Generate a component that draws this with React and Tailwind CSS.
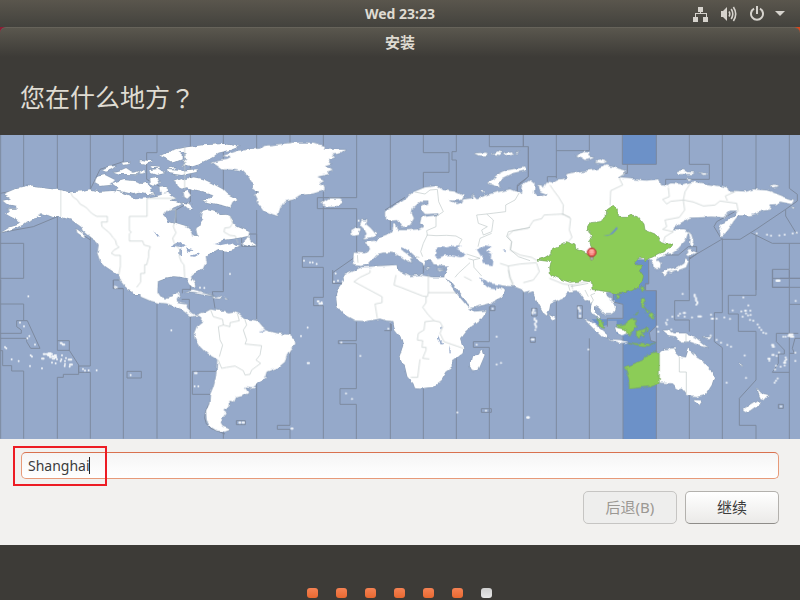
import React, { useState } from 'react';

// map units: 3 per pixel at 800px width, every region has its own origin
const REGIONS = {
    americaNorth: 'translate(0 -15)',
    atlantic: 'translate(540 -15)',
    europe: 'translate(990 -15)',
    asia: 'translate(1500 -15)',
    fareast: 'translate(1920 -15)',
    americaSouth: 'translate(0 435)',
    africa: 'translate(960 405)',
    oceania: 'translate(1560 405)',
};

const LAND = {
    americaNorth: [
        'M8,212 35,206 26,199 12,193 34,184 48,175 80,168 110,172 150,177 180,180 212,187 245,184 268,178 300,185 340,183 365,188 385,196 402,205 440,203 480,196 500,188 527,205 510,212 530,214 545,222 530,230 505,240 490,258 505,275 528,282 560,292 573,302 578,317 592,318 588,300 600,285 610,270 602,262 605,245 625,241 650,248 660,255 680,254 690,262 700,278 712,290 735,300 748,306 745,318 725,322 700,326 670,330 650,342 690,336 700,345 720,350 700,358 680,362 655,360 645,366 630,370 620,380 622,392 615,400 608,415 595,425 582,432 573,440 580,455 586,468 580,472 572,462 563,448 545,444 520,442 490,448 474,454 470,492 400,492 388,472 368,448 360,440 345,428 318,410 300,392 292,370 296,345 288,330 268,316 243,290 215,270 182,260 160,262 145,256 125,250 115,256 122,260 100,266 85,272 68,285 50,292 30,300 10,305 2,308 30,292 55,284 60,278 50,268 35,262 18,252 30,240 22,236 50,236 48,228 20,222Z',
        'M285,160 290,140 315,135 345,150 330,165 300,168Z',
        'M335,160 370,150 410,154 425,162 445,158 455,172 450,184 465,194 440,192 420,188 400,192 370,185 345,182 355,174Z',
        'M303,120 325,110 347,108 335,118 315,125Z',
        'M340,125 360,122 378,114 400,128 415,123 413,133 360,132Z',
        'M365,98 390,95 385,103 370,105Z M420,90 458,94 440,102 420,99Z M420,123 430,120 432,130 420,131Z M455,108 480,110 478,115 458,114Z',
        'M478,78 500,66 530,62 545,72 545,88 520,98 500,88Z',
        'M520,60 560,52 610,46 670,42 717,50 690,60 655,68 640,80 618,92 598,102 570,110 548,106 560,98 545,95 562,86 548,80 560,70 540,66Z',
        'M500,120 540,122 590,118 590,126 545,135 505,130Z M450,120 475,116 495,129 470,135 455,130Z',
        'M450,148 472,143 478,158 465,166 452,160Z M478,170 500,168 502,184 488,194 480,185Z',
        'M524,152 545,144 560,150 580,142 610,148 635,160 668,178 682,192 712,208 698,215 690,232 670,226 640,220 608,212 628,204 640,196 618,190 585,182 560,172 545,176 530,168Z',
        'M548,188 565,182 575,196 565,206 550,200Z M545,218 575,222 590,238 565,236Z M502,118 525,110 520,118Z',
        'M724,342 738,328 745,318 752,332 768,345 745,348Z',
        'M228,296 256,316 252,322 232,308Z M246,290 262,304 280,318 302,335 296,340 270,322 250,304Z',
        'M344,468 352,470 348,474Z M356,434 372,450 392,470 400,482 384,478 364,452Z',
    ],
    atlantic: [
        'M95,98 120,92 138,90 152,82 128,78 175,62 215,58 240,56 250,48 280,45 340,38 400,38 435,48 428,58 495,60 480,70 455,74 465,82 445,88 456,100 436,106 458,118 440,124 448,132 412,140 432,150 418,158 432,166 434,180 400,190 360,195 340,208 312,215 300,235 293,258 275,252 250,240 232,215 222,195 240,186 216,176 218,160 205,140 190,125 155,118 125,118Z',
        'M422,212 430,218 445,208 480,208 490,216 470,230 440,230 430,224Z',
    ],
    europe: [
        'M165,265 165,245 190,230 225,205 250,186 285,172 320,168 340,180 375,185 402,198 395,210 370,212 358,210 378,222 395,218 400,208 430,205 428,192 440,205 470,195 510,185 540,178 570,190 600,200 600,445 352,442 362,430 370,408 345,410 310,405 303,388 285,388 280,408 270,395 255,378 240,365 215,352 217,362 250,384 240,386 246,398 222,388 195,370 180,368 160,368 140,372 128,385 112,402 95,408 72,405 70,385 72,368 105,370 120,358 115,345 102,337 135,332 155,320 180,310 188,300 190,282 198,285 205,300 235,300 265,298 280,290 270,280 275,262 300,258 325,255 325,250 285,252 275,240 275,225 295,220 295,212 275,212 248,235 245,250 252,265 240,285 218,292 204,270 185,272Z',
        'M95,270 112,272 108,282 122,294 140,315 126,322 96,325 110,312 103,298 90,285Z M64,300 78,292 92,296 86,314 66,318Z',
        'M475,160 500,135 530,120 585,112 587,120 545,130 515,145 508,158 512,172Z M452,182 462,184 458,190Z',
        'M435,70 470,68 472,76 450,77Z M485,72 500,64 515,68 510,75Z M522,68 545,64 552,74 530,76Z M556,67 566,66 562,71Z M188,294 196,292 200,300Z M284,414 304,416 296,419Z M318,416 344,418 326,420Z',
    ],
    asia: [
        'M0,188 50,185 62,190 66,165 90,150 104,162 102,190 112,200 134,196 138,200 142,192 120,184 116,165 128,166 130,174 140,158 155,160 175,148 198,145 200,132 235,125 290,118 320,106 350,114 378,122 372,132 352,144 400,148 440,152 475,148 480,165 505,168 510,160 552,162 580,155 620,162 682,172 685,182 740,185 760,178 805,182 850,200 882,210 875,222 840,215 830,222 805,224 815,238 790,242 765,252 750,256 715,256 700,275 690,292 678,308 663,320 657,300 662,285 682,270 706,255 712,245 690,245 670,262 635,260 600,262 570,263 540,280 520,298 550,298 565,305 557,330 535,355 515,370 495,372 470,386 482,400 480,415 465,418 462,402 450,390 420,385 400,400 400,445 0,445Z',
        'M228,76 250,66 272,68 268,78 282,84 258,90 245,82Z M284,98 300,88 322,94 310,100Z',
    ],
    fareast: [
        'M65,428 85,418 112,412 130,400 136,385 146,392 138,412 115,420 85,425 75,438 68,436Z M138,374 150,356 158,364 170,366 155,374 144,378Z M145,300 153,310 160,334 154,350 147,340 150,320Z',
        'M112,124 128,120 145,126 164,128 158,132 118,132Z M174,128 200,130 196,135Z M136,144 154,145 148,150Z M392,168 405,164 414,168 400,172Z M452,230 468,234 460,236Z',
    ],
    americaSouth: [
        'M372,0 395,18 420,38 422,50 450,62 475,68 500,70 520,78 540,85 560,100 572,110 590,106 604,110 608,118 622,100 605,98 590,104 578,102 566,92 560,80 562,70 545,68 532,65 530,60 540,45 535,38 520,42 514,52 500,56 482,50 472,35 470,0Z',
        'M610,100 632,88 650,92 672,92 685,97 700,95 718,102 735,116 770,122 785,140 800,152 830,160 865,164 885,178 886,192 870,208 860,225 855,245 835,262 800,275 795,292 775,310 760,325 735,322 745,338 730,348 705,352 700,365 688,362 690,375 682,385 670,392 680,400 668,415 662,430 668,440 692,448 675,455 650,452 628,438 620,420 618,395 628,375 630,345 640,320 648,290 652,238 620,220 600,200 585,175 582,160 590,140 605,128 608,112Z',
        'M556,36 580,32 615,40 640,48 600,42Z M636,52 655,48 668,52 655,56 640,54Z M674,54 684,57 676,58Z M568,0 580,0 586,14 578,18Z M356,-4 368,4 390,28 376,20Z',
    ],
    africa: [
        'M125,-8 95,5 70,15 72,30 55,55 48,75 52,110 75,135 105,152 140,153 180,146 200,152 220,153 225,180 245,205 250,225 238,262 255,290 262,320 280,340 285,354 300,356 340,350 365,330 380,305 395,295 395,275 428,250 430,235 420,205 440,180 480,150 500,122 460,125 445,112 430,95 412,74 395,50 375,22 340,22 300,15 270,18 255,10 232,0 230,-15 180,-12Z',
        'M372,20 392,35 415,64 440,95 450,115 515,98 550,80 555,62 530,50 545,46 600,50 620,50 620,-20 390,-20Z',
        'M488,238 494,255 475,300 458,304 450,288 455,262 475,255Z',
    ],
    oceania: [
        'M-60,-20 -60,46 -20,48 5,58 12,66 30,62 22,72 40,66 45,80 55,100 72,130 80,137 88,122 92,98 110,92 130,82 145,68 165,65 175,65 185,78 195,92 212,88 215,100 212,122 225,138 238,146 236,138 222,125 222,108 235,112 245,122 256,132 270,132 285,122 288,110 280,95 262,82 258,68 280,60 280,-20Z',
        'M92,132 104,142 98,148 92,144Z M195,150 212,155 245,180 265,198 262,206 245,200 225,180Z M265,208 300,210 325,216 300,219Z',
        'M285,172 325,178 325,190 305,196 290,188Z',
        'M428,182 448,180 462,190 500,190 530,205 548,220 562,230 530,222 510,215 480,215 468,200 448,196Z',
        'M417,250 430,238 465,235 468,248 480,260 498,262 507,232 515,250 530,262 550,275 575,300 582,322 575,345 558,372 530,378 500,375 485,355 478,358 465,350 455,340 417,338Z M524,390 547,392 536,408Z',
        'M712,356 722,368 746,376 733,390 722,388Z M668,420 690,404 712,390 720,400 690,422 676,426Z M550,204 576,200 568,208Z M654,278 670,288 660,286Z M424,12 440,6 436,16Z M442,4 466,4 454,10Z',
    ],
};

const SELECTED_LAND = {
    asia: [
        'M112,390 135,382 155,370 158,355 182,345 200,335 225,345 228,358 250,365 265,372 275,350 268,335 277,320 272,308 260,300 272,278 300,275 318,265 320,240 340,226 352,240 352,262 380,262 395,255 415,260 432,282 435,300 465,312 480,335 498,342 517,342 505,358 470,375 450,385 435,392 432,382 418,385 412,396 405,396 410,405 432,405 418,422 430,440 425,460 415,472 395,482 365,490 350,492 330,486 300,482 276,478 275,456 250,452 210,457 180,447 148,432 146,412 152,395Z',
    ],
    oceania: [
        'M284,76 298,74 294,84 286,86Z M362,52 372,50 370,64 362,64Z',
        'M362,88 372,84 376,98 370,108 378,116 366,112Z M376,118 390,124 384,130Z M386,142 392,130 402,136 400,147Z M342,134 356,126 348,134Z',
        'M290,168 312,165 335,145 350,148 345,160 350,165 335,190 325,195 320,180 292,172Z',
        'M352,182 366,180 378,174 374,188 362,188 376,200 368,202 362,194 358,206 352,202Z M378,170 386,180 382,188Z',
        'M325,217 350,221 365,219 392,224 406,218 386,228 350,225Z',
        'M228,145 242,148 250,158 254,172 240,168Z',
        'M316,290 345,280 368,270 385,252 405,246 418,250 418,338 385,350 345,355 328,357 326,330Z',
    ],
};

// seas and lakes lying over the land shapes
const WATER = {
    americaNorth: [
        'M508,348 530,335 558,345 548,352 520,348Z M538,358 547,354 545,378 538,376Z M558,352 580,358 572,366 566,370Z M570,378 596,368 600,370 582,380Z M460,302 468,306 480,322 474,322Z M402,200 430,198 450,204 420,206Z',
        'M566,220 590,225 600,240 580,240Z M640,342 656,338 668,334 690,330 712,336 712,342 690,340 660,346Z',
    ],
    europe: [
        'M315,378 318,358 332,348 350,352 366,348 392,346 380,356 398,366 408,376 395,382 365,376 345,376 325,384Z M440,358 465,346 485,350 468,362 484,372 482,384 490,392 488,406 462,402 455,382Z M214,352 222,354 240,368 235,372Z',
    ],
    asia: ['M8,358 20,358 16,364Z'],
    africa: [
        'M480,22 490,28 515,40 545,45 540,52 530,48 528,58 510,56 500,50 488,38Z',
        'M354,192 360,210 372,220 362,220 354,206Z M388,226 393,246 388,246Z M360,170 368,175 362,180Z',
    ],
    americaSouth: ['M778,152 800,150 790,156Z'],
};

// zone limits drawn on the water
const ZONE_LINES = {
    americaNorth: 'M2,15V480 M71,15V168 M0,340H71V445H0 M172,15V480 M172,260 100,290 0,308 M271,15V178L300,118 370,95V15 M271,318V480 M271,330 228,300 M471,15V68H440V148L500,180 M571,15V215L528,240V300 M370,475H340V450H358 M0,190 30,185',
    atlantic: 'M130,15V190 M130,355V480 M230,15V190 M230,240V480 M205,312H230V349H185V320 M330,15V480 M430,15V50 M430,185V380H367V412H430V480 M530,15V203H412V236H530V378L458,428V460H485',
    europe: 'M181,15V300 M280,15V68H357V127H280V180 M379,15V65H366V90H379V190 M379,350V385 M478,15V50H595V140L562,170V190 M580,15V50 M165,240 225,202 M280,385V430',
    asia: 'M70,15V50 M169,15V145 M268,15V62H169 M367,15V103H469V15 M382,103V130H350 M52,185V165L85,140V50 M142,155V140H169 M446,390V460H437V480',
    fareast: 'M148,15V103H208V148H77V165 M247,15V165 M247,325V480 M348,15V180 M348,310V480 M448,15V175L472,193V213L437,238 348,298 300,328H245L222,290 230,275 285,245 M437,238V258L470,312 M332,308 397,340H480 M448,340V418H397V472H480 M448,445V418 M480,445H420 M148,380V480 M148,385 245,328 M75,375H115L145,350H170V372L148,388',
    americaSouth: 'M2,0V476 M0,72H71V122H50V140L64,150V160H0 M0,175H80V185L92,205H120L82,122H71 M0,212H8V257H35V273H71V476 M172,0V211H208L236,255V283H190V292H172V476 M172,182H208V212 M271,0V258H236V277H271V476 M340,0V26H370V476 M471,70V476 M571,110V476 M547,40V28H571 M545,58H568V90 M571,0V32 M670,0V35H637L645,85 M670,455V476 M770,0V122 M770,310V476 M870,0V165 M870,200V436H832V448H870V476 M970,0V52H941V77H970V476 M381,274H424V294H381Z M577,274H650 M577,274V343H630 M709,422H736V434H709Z M628,370Q598,420 632,445L675,462',
    africa: 'M109,155V212H55V221H109V356H60V403H109V508 M211,160V508 M193,182H214V162 M310,356V508 M409,265V508 M508,110V215H460V232H508V508 M484,416H514V427H484Z M510,108H525V122H510Z M610,50V508 M635,115H651V138H635Z M631,202H646V217H631Z M38,0V40H68',
    oceania: 'M109,90V507 M208,205V507 M309,200V507 M409,62V507 M508,0V92H464V150H508V185 M508,375V507 M607,0V128H583V215L607,233V507 M708,0V76H625V132H655V184H708V330L658,385V466H708V507 M808,0V507 M758,0V25H840 M758,25V52H808 M808,103H840 M835,190H769V215L793,240V252H775V280L757,307H808 M840,205H825L817,235 823,250H808 M775,403H790V415H775Z M172,107H187V145H172Z M280,66V96L309,103V145H262V170 M386,0V42H376V62H409V168L388,188 392,212 409,217',
};

const BORDERS = {
    americaNorth: 'M182,180V260 M212,187 218,200 232,210 240,222 258,232 275,250 290,259H322V276H304L306,290 330,310 338,322 346,330 350,345 357,352 342,360 334,370 345,376H361V408L356,436 M528,205H441V259H388V302L394,306 388,312V333H428L432,345 451,350 446,364 446,380 440,404H434V430H422V456L410,472 M510,238 528,240 527,262 520,290 528,308 518,325 522,338 540,360 538,380 544,395 552,405 554,442 M554,50V180 M690,258 698,280 690,292 674,294 672,306 690,316 706,318 714,340',
    europe: 'M255,186 285,192 300,180 322,178 326,215 340,245 318,260 318,290 290,302 292,315 280,340 272,365 278,380 M290,315 318,317 350,316 378,318 396,328 385,348 M568,188 555,210 527,225V245L470,252 440,255 445,280 472,290 455,300 460,315 485,305 490,270 470,252 M485,310 450,325 444,350 M268,382 258,380 M82,375 84,398 M600,292 535,305 530,320 545,335 542,360 565,380 600,392 M410,372 450,385 430,390 415,386 M430,390 432,412 455,438 M420,398 385,430 375,442',
    asia: 'M150,165 160,180 175,200 190,225 188,255 M210,262 188,252 132,255 125,266 100,272 85,295 40,302 22,318 35,335 30,360 60,375 95,382 112,392 M188,252 212,265 208,300 216,322 205,335 M378,125 358,145 368,165 332,182 330,226 M0,400 25,408 60,402 110,398 M25,408 28,440 40,470 M110,400 118,425 100,450 70,458 M148,445 190,462 218,465 240,460 275,450 M215,462 218,478',
    fareast: 'M85,172 88,200 68,208 80,222 92,214 130,210 135,185 150,162 M130,210 160,216 190,228 225,225 240,213 290,220 295,245 M262,212 256,198 285,185 M130,212 134,240 118,262 75,270 80,290 68,298 100,305 75,320 70,338',
    americaSouth: 'M632,90 640,110 668,118 670,135 655,140 660,180 668,195 658,230 M670,135 690,140 690,128 718,122 712,100 M734,116 740,135 730,150 740,180 735,192 785,197 780,225 768,240 782,250 755,270 750,283 735,285 730,272 705,258 680,262 665,265 655,240',
    africa: 'M150,0 150,8 120,22 102,35 186,80V98L165,102 172,145 M228,15 222,45 242,52 308,78 322,80 325,68H408 M325,12V68 M318,80V98L308,112 325,135 342,152 315,155 312,180 295,190 292,210 308,212 306,232H318V240L308,265 328,267 M300,268 297,290 293,322 272,322 M342,152 360,156 368,170 360,190 372,215 430,235 M432,20 455,32 M565,0 572,25 580,42',
    oceania: 'M478,260V306H499V372 M498,190V218 M215,100 220,90 212,75 225,70 M145,45 150,62 M195,60 205,80 M152,50 180,45 205,40',
};

const ISLETS = {
    americaNorth: 'M345,470h0 M350,472h0',
    atlantic: 'M150,432h0 M372,392h0 M390,397h0 M398,397h0 M410,402h0 M467,430h0 M462,455h0 M474,452h0 M488,454h0 M536,272h0 M60,473h0 M73,474h0',
    fareast: 'M350,310h0 M381,314h0 M393,317h0 M418,316h0 M434,314h0 M458,310h0 M470,308h0 M410,452h8',
    americaSouth: 'M85,49h0 M60,128h0 M72,139h0 M88,168h0 M82,175h0 M105,194h0 M15,201h0 M19,205h0 M35,238h0 M56,243h0 M92,226h0 M96,230h0 M90,258h0 M126,265h0 M126,236h5 M131,222h4 M140,222h3 M146,220h6 M144,226h6 M153,222h3 M150,231h3 M157,229h4 M164,226h4 M158,236h5 M166,232h3 M171,238h0 M156,248h0 M167,250h0 M186,226h0 M184,238h0 M182,243h0 M198,234h0 M206,239h8 M195,243h0 M195,252h0 M194,258h0 M210,254h6 M209,260h0 M182,189h3 M188,194h5 M249,267h0 M255,272h0 M266,271h0 M290,271h0 M392,285h0 M585,279h5 M584,319h0 M595,319h0 M514,151h0 M903,168h0 M923,143h0 M923,249h4 M718,428h3 M728,428h4 M874,446h4 M953,64h3 M958,71h8 M965,67h0',
    africa: 'M64,217h0 M121,258h0 M78,370h0 M96,387h0 M205,176h0 M470,224h0 M530,200h0 M530,283h0 M543,279h0 M412,427h0 M498,422h0 M518,116h0 M622,442h4',
    oceania: 'M41,118v3 M38,126v4 M45,128h0 M44,145v5 M49,152v4 M45,160v4 M48,168v4 M46,180h0 M35,208h6 M176,112v4 M180,120v4 M180,136v4 M205,238h0 M22,442h4 M488,72h0 M524,74v5 M528,84v8 M532,96v4 M529,104h0 M480,131h0 M491,129h4 M494,140h0 M475,137h0 M457,140h0 M516,142h0 M535,139h8 M442,150h0 M438,158h0 M440,163h0 M573,134h0 M575,146h4 M590,146h0 M613,142h0 M630,147h0 M670,82h0 M638,121h0 M664,124h0 M675,122h3 M685,106h0 M691,122h0 M678,130h0 M684,136h0 M692,135h0 M668,140h0 M690,150h0 M700,152h0 M713,163h0 M718,172h0 M724,180h0 M730,188h0 M738,190h0 M827,93h0 M790,200h0 M797,200h0 M805,198h8 M808,193h10 M812,200h8 M770,32h8 M756,225h4 M758,230h4 M777,247h0 M757,255h4 M770,258h0 M745,266h4 M748,272h0 M797,262h0 M799,268h0 M795,272h0 M792,278h4 M794,286h0 M782,290h0 M768,287h0 M765,298h0 M826,273h0 M826,248h0 M773,325h0 M768,332h0 M764,338h0 M678,324h0 M620,338h0 M783,409h0 M590,210h0 M603,218h0 M622,225h0 M633,230h0 M674,256h0 M454,178h0 M415,185h0 M412,170h0 M572,196h0',
};

const Shapes = ({ data }) =>
    Object.entries(data).map(([region, paths]) => (
        <g key={region} transform={REGIONS[region]}>
            {[].concat(paths).map((d) => (
                <path key={d} d={d} />
            ))}
        </g>
    ));

const WorldMap = () => (
    <svg viewBox="0 0 2400 912" className="block w-full h-auto bg-[#95a9ca]" role="img" aria-label="时区地图">
        <defs>
            <filter id="coast" x="0" y="0" width="100%" height="100%" colorInterpolationFilters="sRGB">
                <feTurbulence type="fractalNoise" baseFrequency="0.05" numOctaves="2" seed="4" />
                <feDisplacementMap in="SourceGraphic" scale="13" xChannelSelector="R" yChannelSelector="G" />
            </filter>
            <g id="land">
                <Shapes data={LAND} />
            </g>
            <radialGradient id="pinHead" cx="0.5" cy="0.4" r="0.6">
                <stop offset="0" stopColor="#ffaaa2" />
                <stop offset="1" stopColor="#ea4a48" />
            </radialGradient>
        </defs>

        {/* selected zone */}
        <g fill="#6c91c8">
            <path d="M1867,0H1970V88H1867Z" />
            <path
                transform={REGIONS.oceania}
                d="M386,-30V42H376V62H409V168L388,188 392,212 409,217V507H309V200L290,190V152H262V165L240,170 215,148H309V103L280,95V60L340,40V-30Z"
            />
        </g>

        <g fill="none" stroke="#7d8a9f" strokeWidth="3">
            <Shapes data={ZONE_LINES} />
        </g>

        <g filter="url(#coast)">
            <use href="#land" fill="none" stroke="#8799ae" strokeWidth="3" />
            <use href="#land" fill="#ffffff" />
            <g fill="#95a9ca">
                <Shapes data={WATER} />
            </g>
        </g>

        <g fill="none" stroke="#c0c9c9" strokeWidth="2" strokeLinejoin="round">
            <Shapes data={BORDERS} />
        </g>

        <g filter="url(#coast)" fill="#8ccc57" stroke="#76a262" strokeWidth="2">
            <Shapes data={SELECTED_LAND} />
        </g>

        {/* Baikal */}
        <path
            transform={REGIONS.asia}
            d="M310,317 328,314 340,302 350,290 353,296 338,312 322,318Z"
            fill="#6c91c8"
        />

        <g fill="none" stroke="#f4f7fa" strokeWidth="6" strokeLinecap="round">
            <Shapes data={ISLETS} />
        </g>

        {/* pin */}
        <g transform="translate(1775 352)">
            <path d="M-4,12H4V20L0,24 -4,20Z" fill="#b5b5b5" stroke="#777777" strokeWidth="2" />
            <circle r="13" fill="url(#pinHead)" stroke="#a92f2f" strokeWidth="3" />
            <path d="M-6,-6H6M-7,0H7M-5,6H5" stroke="#ffc7c0" strokeWidth="2" />
        </g>
    </svg>
);

const NetworkIcon = () => (
    <svg width="16" height="16" viewBox="0 0 16 16" fill="#d6d3cd">
        <path d="M5 1h5v5H8v1h6v4h1v5h-5v-5h3V8H3v3h2v5H0v-5h2V7h5V6H5z" />
    </svg>
);

const VolumeIcon = () => (
    <svg width="16" height="16" viewBox="0 0 16 16" fill="none" stroke="#d6d3cd" strokeWidth="1.6">
        <path d="M0 5h2l4-4v14l-4-4H0z" fill="#d6d3cd" stroke="none" />
        <path d="M8 5.5q1.6 2.5 0 5M10.2 3q3.2 5 0 10M12.4 1q4.6 7 0 14" />
    </svg>
);

const PowerIcon = () => (
    <svg width="16" height="16" viewBox="0 0 16 16" fill="none" stroke="#d6d3cd" strokeWidth="2">
        <path d="M5 2.6a6 6 0 1 0 6 0M8 0v8" />
    </svg>
);

const TopBar = () => (
    <header className="relative flex h-[27px] items-center justify-center bg-linear-to-b from-[#5a564d] to-[#43423d] text-[#dfdbd2]">
        <span className="text-sm font-bold leading-5">Wed 23:23</span>
        <div className="absolute inset-y-0 right-[15px] flex items-center gap-3">
            <button type="button" aria-label="网络"><NetworkIcon /></button>
            <button type="button" aria-label="音量"><VolumeIcon /></button>
            <button type="button" aria-label="电源" className="flex items-center gap-2.5">
                <PowerIcon />
                <svg width="10" height="5" viewBox="0 0 10 5" fill="#d6d3cd">
                    <path d="M0 0h10L5 5z" />
                </svg>
            </button>
        </div>
    </header>
);

const STEPS = 7;

const App = () => {
    const [city, setCity] = useState('Shanghai');

    return (
        <div className="flex min-h-screen flex-col overflow-hidden bg-[#3d3b37] font-['Noto_Sans','Noto_Sans_CJK_SC',sans-serif]">
            <TopBar />

            <div className="bg-linear-to-r from-[#8c1d35] to-[#d9461a]">
                <div className="flex h-[30px] items-center justify-center rounded-t-md border-t border-[#66635a] bg-linear-to-b from-[#5a574e] to-[#3d3b37] pb-0.5 text-[15px] leading-5 font-bold text-[#dfdbd2]">
                    安装
                </div>
            </div>
            <h1 className="flex h-[78px] items-center px-5 pt-0.5 text-[25px] leading-8 font-normal text-[#dfdbd2]">
                您在什么地方<span className="font-['Noto_Sans_CJK_TC']" lang="zh-TW">？</span>
            </h1>

            <main className="bg-[#f2f1ef]">
                <WorldMap />

                <form className="px-[21px] pt-[13px] pb-[21px]" onSubmit={(e) => e.preventDefault()}>
                    <div className="relative">
                        <input
                            type="text"
                            name="city"
                            aria-label="城市"
                            value={city}
                            onChange={(e) => setCity(e.target.value)}
                            className="block h-[27px] w-full rounded-[5px] border border-[#e79a79] border-t-[#d9714f] bg-linear-to-b from-[#f5f5f5] to-white px-1.5 text-sm text-[#3c3c3c] caret-transparent outline-none"
                        />
                        <span className="absolute top-[5px] left-[68px] h-[17px] w-px bg-[#222]" />
                        <span className="pointer-events-none absolute -top-1.5 -left-2 h-10 w-[94px] border-2 border-[#ed1c24]" />
                    </div>

                    <div className="mt-3 flex justify-end gap-2">
                        <button
                            type="button"
                            disabled
                            className="h-[33px] w-[94px] rounded-[5px] border border-[#c6c5c3] bg-[#eeeeed] text-[15px] text-[#9b9893]"
                        >
                            后退(B)
                        </button>
                        <button
                            type="submit"
                            className="h-[33px] w-[94px] rounded-[5px] border border-[#b3b1ad] border-b-[#8f8d89] bg-linear-to-b from-white to-[#ebeae8] text-[15px] text-[#3c3c3c]"
                        >
                            继续
                        </button>
                    </div>
                </form>
            </main>

            <footer className="flex flex-1 items-end justify-center gap-[18px] pr-0.5 pb-0.5">
                {Array.from({ length: STEPS }, (_, i) => (
                    <span
                        key={i}
                        className={
                            i < STEPS - 1
                                ? 'h-2.5 w-[11px] rounded-[3px] bg-linear-to-b from-[#f58253] to-[#e9682f]'
                                : 'h-2.5 w-[11px] rounded-[3px] bg-linear-to-b from-[#cfcfcf] to-[#e8e8e8]'
                        }
                    />
                ))}
            </footer>
        </div>
    );
};

export default App;
